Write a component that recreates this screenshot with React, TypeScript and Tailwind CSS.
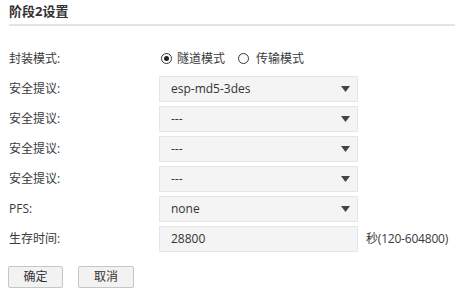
import React from "react";

const cjk = { fontFamily: '"Open Sans", "Noto Sans CJK SC", sans-serif' };

function Arrow() {
  return (
    <svg width="9" height="6" viewBox="0 0 9 6" className="absolute right-[7px] top-1/2 -translate-y-1/2">
      <path d="M0 0 L9 0 L4.5 6 Z" fill="#444" />
    </svg>
  );
}

function Radio({ checked }: { checked: boolean }) {
  return (
    <span className="w-[11px] h-[11px] rounded-full border-[1.5px] border-[#333] flex items-center justify-center">
      {checked && <span className="w-[5px] h-[5px] rounded-full bg-[#222]" />}
    </span>
  );
}

function Row({ label, children }: { label: string; children: React.ReactNode }) {
  return (
    <div className="flex items-center h-[30px]">
      <div className="w-[150px] text-[12px] text-[#3a3a3a]">{label}</div>
      {children}
    </div>
  );
}

function Box({ value, arrow = true }: { value: string; arrow?: boolean }) {
  return (
    <div className="relative w-[199px] h-[26px] bg-[#f4f4f4] border border-[#e6e6e6] flex items-center pl-[11px] text-[12px] text-[#333]">
      {value}
      {arrow && <Arrow />}
    </div>
  );
}

export default function App() {
  return (
    <div className="w-[455px] h-[294px] bg-white pl-[9px]" style={cjk}>
      <div className="pt-[2px] h-[24px] text-[13px] font-bold text-[#333] leading-[18px]">阶段2设置</div>
      <div className="h-[2px] bg-[#e4e4e4]" />
      <div className="pt-[17px]">
        <div className="flex items-center h-[31px]">
          <div className="w-[152px] text-[12px] text-[#3a3a3a]">封装模式:</div>
          <div className="flex items-center text-[12px] text-[#3a3a3a]">
            <Radio checked />
            <span className="ml-[5px]">隧道模式</span>
            <span className="ml-[13px]"><Radio checked={false} /></span>
            <span className="ml-[7px]">传输模式</span>
          </div>
        </div>
        <Row label="安全提议:"><Box value="esp-md5-3des" /></Row>
        <Row label="安全提议:"><Box value="---" /></Row>
        <Row label="安全提议:"><Box value="---" /></Row>
        <Row label="安全提议:"><Box value="---" /></Row>
        <Row label="PFS:"><Box value="none" /></Row>
        <Row label="生存时间:">
          <Box value="28800" arrow={false} />
          <span className="ml-[8px] text-[12px] text-[#3a3a3a] tracking-[-0.2px]">秒(120-604800)</span>
        </Row>
      </div>
      <div className="flex gap-[15px] mt-[12px] -ml-[1px]">
        <button className="w-[55px] h-[22px] bg-[#f2f2f2] border border-[#c6c6c6] rounded-[2px] text-[12px] text-[#333]">确定</button>
        <button className="w-[56px] h-[22px] bg-[#f2f2f2] border border-[#c6c6c6] rounded-[2px] text-[12px] text-[#333]">取消</button>
      </div>
    </div>
  );
}
